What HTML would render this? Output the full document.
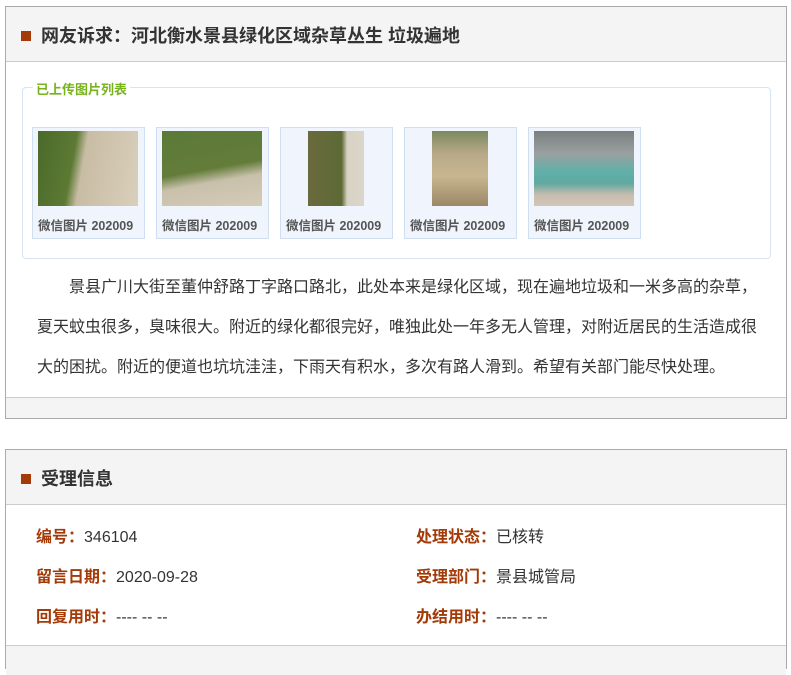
<!DOCTYPE html>
<html><head><meta charset="utf-8"><style>
*{margin:0;padding:0;box-sizing:border-box}
body{width:791px;height:649px;background:#fff;font-family:"Liberation Sans","Microsoft YaHei","Noto Sans CJK SC",sans-serif;position:relative;overflow:hidden}
.box{position:absolute;left:5px;width:782px;border:1px solid #aaa}
.hd{height:55px;background:#f4f4f4;border-bottom:1px solid #ccc;position:relative}
.hd i{position:absolute;left:15px;top:24px;width:10px;height:10px;background:#a33a08}
.hd b{position:absolute;left:35px;top:15px;font-size:18px;color:#333;font-weight:bold}
fieldset{position:absolute;left:16px;top:80px;width:749px;height:172px;border:1px solid #d6e4f5;border-radius:4px}
legend{position:absolute;left:10px;top:-9px;background:#fff;padding:0 3px;font-size:13px;color:#78b31c;font-weight:bold}
.th{position:absolute;top:120px;width:113px;height:112px;background:#f0f5fd;border:1px solid #cfdff0}
.th div{position:absolute;top:3px;height:75px}
.th span{position:absolute;left:5px;top:87px;font-size:12.5px;color:#555;font-weight:bold;white-space:nowrap}
p{position:absolute;left:31px;top:261px;width:724px;font-size:16px;line-height:40px;color:#333;text-indent:32px}
.ft{position:absolute;left:0;right:0;bottom:0;height:21px;background:#f4f4f4;border-top:1px solid #ccc}
.r{position:absolute;font-size:16px;color:#333}
.r em{font-style:normal;color:#a33a08;font-weight:bold}
</style></head><body>
<div class="box" style="top:6px;height:413px">
<div class="hd"><i></i><b>网友诉求：河北衡水景县绿化区域杂草丛生 垃圾遍地</b></div>
<fieldset><legend>已上传图片列表</legend></fieldset>
<div class="th" style="left:26px"><div style="left:5px;width:100px;background:linear-gradient(100deg,#4a6a2a 0%,#5d7a34 35%,#c8bca4 45%,#d9cfbb 100%)"></div><span>微信图片 202009</span></div>
<div class="th" style="left:150px"><div style="left:5px;width:100px;background:linear-gradient(170deg,#5a7a38 0%,#647c3a 50%,#c8c0aa 65%,#d5ccb8 100%)"></div><span>微信图片 202009</span></div>
<div class="th" style="left:274px"><div style="left:27px;width:56px;background:linear-gradient(90deg,#6a6a3e 0%,#5d6a35 60%,#d8d2c4 70%,#dcd6ca 100%)"></div><span>微信图片 202009</span></div>
<div class="th" style="left:398px"><div style="left:27px;width:56px;background:linear-gradient(180deg,#7a8a60 0%,#b8a888 30%,#c8b690 60%,#9a8868 100%)"></div><span>微信图片 202009</span></div>
<div class="th" style="left:522px"><div style="left:5px;width:100px;background:linear-gradient(180deg,#7a8080 0%,#9aa0a0 30%,#5fb0a8 55%,#62a8a0 70%,#c8bcae 85%,#d0c6b8 100%)"></div><span>微信图片 202009</span></div>
<p>景县广川大街至董仲舒路丁字路口路北，此处本来是绿化区域，现在遍地垃圾和一米多高的杂草，夏天蚊虫很多，臭味很大。附近的绿化都很完好，唯独此处一年多无人管理，对附近居民的生活造成很大的困扰。附近的便道也坑坑洼洼，下雨天有积水，多次有路人滑到。希望有关部门能尽快处理。</p>
<div class="ft"></div>
</div>
<div class="box" style="top:449px;height:220px">
<div class="hd"><i></i><b>受理信息</b></div>
<div class="r" style="left:30px;top:73px"><em>编号：</em>346104</div>
<div class="r" style="left:410px;top:73px"><em>处理状态：</em>已核转</div>
<div class="r" style="left:30px;top:113px"><em>留言日期：</em>2020-09-28</div>
<div class="r" style="left:410px;top:113px"><em>受理部门：</em>景县城管局</div>
<div class="r" style="left:30px;top:153px"><em>回复用时：</em>---- -- --</div>
<div class="r" style="left:410px;top:153px"><em>办结用时：</em>---- -- --</div>
<div style="position:absolute;left:0;right:0;top:195px;border-top:1px solid #ccc;height:30px;background:#f4f4f4"></div>
</div>
</body></html>
